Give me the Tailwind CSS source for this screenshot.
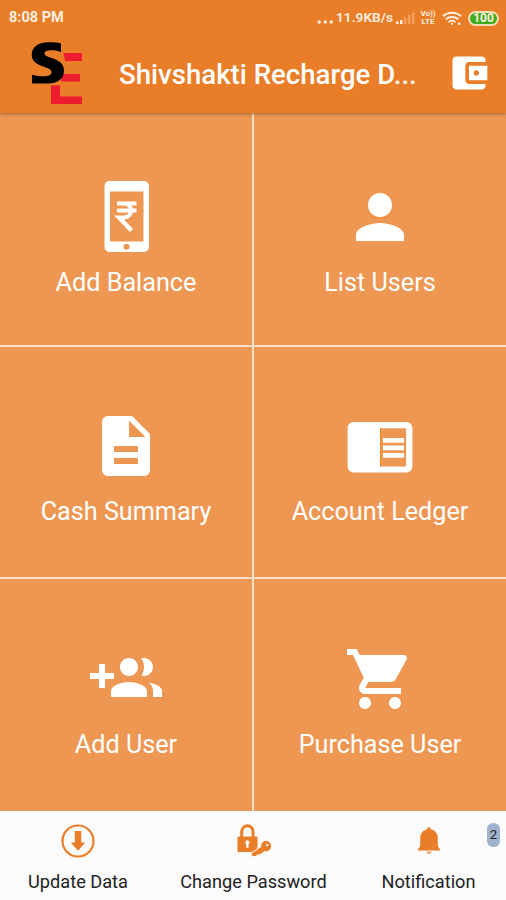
<!DOCTYPE html>
<html lang="en">
<head>
    <meta charset="UTF-8">
    <meta name="viewport" content="width=device-width, initial-scale=1.0">
    <title>Shivshakti Recharge</title>
    <script src="https://cdn.jsdelivr.net/npm/@tailwindcss/browser@4"></script>
</head>
<body class="bg-[#fbfbfb] font-[Roboto,sans-serif] w-[506px] h-[900px] flex flex-col overflow-hidden">

    <!-- Header -->
    <header class="relative z-10 h-[113px] shrink-0 bg-[#ea7d27] text-white shadow-[0_1px_3px_rgba(90,60,30,0.6)]">
        <!-- Status bar -->
        <div class="h-9 pl-[9px] pr-[7px] flex items-center justify-between text-[#fff0e2]">
            <span class="text-[14.500px] font-bold leading-none">8:08 PM</span>
            <div class="flex items-center">
                <svg class="w-[17px] h-4 mr-[2px]" viewBox="0 0 17 16" fill="currentColor">
                    <circle cx="2.2" cy="12" r="1.7"/><circle cx="8.2" cy="12" r="1.7"/><circle cx="14.2" cy="12" r="1.7"/>
                </svg>
                <span class="text-[13.7px] font-semibold leading-none">11.9KB/s</span>
                <svg class="w-[19px] h-[14px] ml-[3px]" viewBox="0 0 19 14" fill="currentColor">
                    <path d="M0 10.500h2.500V13H0zM4 9h2.500v4H4z"/>
                    <path d="M8 6.500h2.500V13H8zM12 4h2.500v9H12zM16 1.500h2.500V13H16z" opacity=".3"/>
                </svg>
                <div class="ml-[5px] w-[16px] h-[16px] text-[8px] font-bold flex flex-col items-center">
                    <span class="h-2 leading-[8px]">Vo))</span>
                    <span class="h-2 leading-[8px]">LTE</span>
                </div>
                <svg class="w-5 h-[15px] ml-[6px]" viewBox="0 0 20 15" fill="none" stroke="currentColor" stroke-width="1.900">
                    <path d="M1 5.200c5-4.600 13-4.600 18 0M3.800 8.200c3.400-3 9-3 12.400 0M6.600 11.200c2-1.700 4.800-1.700 6.800 0"/>
                    <circle cx="10" cy="13" r="1" fill="currentColor" stroke="none"/>
                    <circle cx="17.200" cy="12.800" r="1.300" fill="currentColor" stroke="none"/>
                </svg>
                <div class="ml-[6px] w-[31px] h-[15px] rounded-full border-2 border-[#f6dcb8] bg-[#3fae1c] text-[12px] font-bold leading-[11px] text-center">100</div>
            </div>
        </div>
        <!-- Title bar -->
        <div class="h-[77px] pl-[31px] pr-[15px] flex items-center">
            <svg class="w-[52px] h-[64px] -mt-[2px]" viewBox="31 42 52 64">
                <path fill="#ec1c2e" d="M63.500 53H82v8H65zM62 74h18v7.500H61zM51 85.500h9v11h22v7.500H51z"/>
                <path fill="#000" d="M61 43.400v8.800c-3-1.300-6-1.900-9.500-1.900-4.500 0-7 .9-7 3 0 2 2 3 6.500 4.500 8.500 2.900 13 6 13 13 0 8.600-7 12.700-16 12.700H32v-8.800c4 1.200 8 1.500 11.500 1.500 5 0 8-1.200 8-4 0-2.600-3-3.800-7.500-5.400C36.500 64.200 31.700 61 31.700 55c0-8.500 7-12.800 17.300-12.800 4.500 0 8.500.2 12 1.200z"/>
            </svg>
            <h1 class="ml-[36px] text-[27.600px] font-medium leading-none whitespace-nowrap">Shivshakti Recharge D...</h1>
            <svg class="w-[44px] h-[44px] ml-auto -mt-[3px]" viewBox="0 0 24 24" fill="currentColor">
                <path d="M21 18v1c0 1.100-.9 2-2 2H5c-1.110 0-2-.9-2-2V5c0-1.100.89-2 2-2h14c1.100 0 2 .9 2 2v1h-9c-1.110 0-2 .9-2 2v8c0 1.100.89 2 2 2h9zm-9-2h10V8H12v8zm4-2.500c-.83 0-1.500-.67-1.500-1.500s.67-1.500 1.500-1.500 1.500.67 1.500 1.500-.67 1.500-1.500 1.500z"/>
            </svg>
        </div>
    </header>

    <!-- Menu Grid -->
    <main class="h-[698px] shrink-0 grid grid-cols-[252px_252px] grid-rows-[232px_230px_232px] gap-[2px] bg-[#fbdfc6] text-white text-[25.200px] leading-8">
        <a href="#" class="bg-[#ee9753] flex flex-col items-center pt-[68px]">
            <svg class="w-[72px] h-[72px]" viewBox="0 0 72 72" fill="currentColor">
                <path fill-rule="evenodd" d="M19.500 0H54a5 5 0 0 1 5 5v61a5 5 0 0 1-5 5H19.500a5 5 0 0 1-5-5V5a5 5 0 0 1 5-5zM20 10.500v50h33.500v-50zM36.500 62.700a3 3 0 1 0 0 6 3 3 0 0 0 0-6z"/>
                <path d="M27 22.500h19.500M27 29.500h19.500M28 22.500h5.500c10 0 10 14 0 14h-4.500l12.500 13" fill="none" stroke="currentColor" stroke-width="4.200"/>
            </svg>
            <span class="mt-[14px]">Add Balance</span>
        </a>
        <a href="#" class="bg-[#ee9753] flex flex-col items-center pt-[68px]">
            <svg class="w-[72px] h-[72px]" viewBox="0 0 24 24" fill="currentColor">
                <path d="M12 12c2.210 0 4-1.790 4-4s-1.790-4-4-4-4 1.790-4 4 1.790 4 4 4zm0 2c-2.670 0-8 1.340-8 4v2h16v-2c0-2.660-5.330-4-8-4z"/>
            </svg>
            <span class="mt-[14px]">List Users</span>
        </a>
        <a href="#" class="bg-[#ee9753] flex flex-col items-center pt-[63px]">
            <svg class="w-[72px] h-[72px]" viewBox="0 0 24 24" fill="currentColor">
                <path d="M14 2H6c-1.100 0-1.990.9-1.990 2L4 20c0 1.100.89 2 1.990 2H18c1.100 0 2-.9 2-2V8l-6-6zm2 16H8v-2h8v2zm0-4H8v-2h8v2zm-3-5V3.500L18.500 9H13z"/>
            </svg>
            <span class="mt-[14px]">Cash Summary</span>
        </a>
        <a href="#" class="bg-[#ee9753] flex flex-col items-center pt-[63px]">
            <svg class="w-[72px] h-[72px]" viewBox="0 0 24 24" fill="currentColor">
                <path d="M20.700 4H3.300C2.200 4 1.200 4.900 1.200 6v12.800c0 1.100 1 2 2.100 2h17.400c1.100 0 2.100-.9 2.100-2V6c0-1.100-1-2-2.100-2zm0 14.800H12V6.100h8.700z"/>
                <path d="M13 9.300h7v1.600h-7zM13 11.800h7v1.600h-7zM13 14.300h7v1.600h-7z"/>
                <path d="M12 6.100h.3v12.700H12z" fill="#ee8a1c"/>
            </svg>
            <span class="mt-[14px]">Account Ledger</span>
        </a>
        <a href="#" class="bg-[#ee9753] flex flex-col items-center pt-[64px]">
            <svg class="w-[72px] h-[72px]" viewBox="0 0 24 24" fill="currentColor">
                <path d="M8 10H5V7H3v3H0v2h3v3h2v-3h3v-2zm10 1c1.660 0 2.990-1.340 2.990-3S19.660 5 18 5c-.32 0-.63.05-.91.14.57.81.9 1.790.9 2.860s-.34 2.040-.9 2.860c.28.09.59.14.91.14zm-5 0c1.660 0 2.990-1.340 2.990-3S14.660 5 13 5c-1.660 0-3 1.340-3 3s1.340 3 3 3zm6.620 2.160c.83.73 1.380 1.660 1.380 2.840v2h3v-2c0-1.540-2.370-2.490-4.380-2.840zM13 13c-2 0-6 1-6 3v2h12v-2c0-2-4-3-6-3z"/>
            </svg>
            <span class="mt-[14px]">Add User</span>
        </a>
        <a href="#" class="bg-[#ee9753] flex flex-col items-center pt-[64px]">
            <svg class="w-[72px] h-[72px]" viewBox="0 0 24 24" fill="currentColor">
                <path d="M7 18c-1.100 0-1.990.9-1.990 2S5.900 22 7 22s2-.9 2-2-.9-2-2-2zM1 2v2h2l3.600 7.590-1.350 2.450c-.16.28-.25.61-.25.96 0 1.100.9 2 2 2h12v-2H7.420c-.14 0-.25-.11-.25-.25l.03-.12.9-1.630h7.450c.75 0 1.410-.41 1.750-1.030l3.580-6.490c.08-.14.12-.31.12-.48 0-.55-.45-1-1-1H5.210l-.94-2H1zm16 16c-1.100 0-1.990.9-1.990 2s.89 2 1.990 2 2-.9 2-2-.9-2-2-2z"/>
            </svg>
            <span class="mt-[14px]">Purchase User</span>
        </a>
    </main>

    <!-- Bottom Navigation -->
    <nav class="relative flex-1 grid grid-cols-[156px_195px_155px] text-[18.200px] leading-6 text-[#222]">
        <a href="#" class="flex flex-col items-center pt-[12px]">
            <svg class="w-[36px] h-[36px] text-[#ea7d27]" viewBox="0 0 36 36" fill="currentColor">
                <circle cx="18" cy="18" r="15.500" fill="none" stroke="currentColor" stroke-width="2.200"/>
                <path d="M14.800 8h6.400v11.500h4L18 27.800l-7.200-8.300h4z"/>
            </svg>
            <span class="mt-[11px]">Update Data</span>
        </a>
        <a href="#" class="flex flex-col items-center pt-[12px]">
            <svg class="w-[36px] h-[36px] text-[#ea7d27]" viewBox="0 0 36 36" fill="currentColor">
                <path d="M5.700 15V9a5.700 6.300 0 0 1 11.400 0v6" fill="none" stroke="currentColor" stroke-width="3"/>
                <rect x="1.500" y="13.500" width="20" height="15.500" rx="1"/>
                <path d="M11.400 17.200a2.200 2.200 0 0 0-1.200 4v3.600h2.400v-3.600a2.200 2.200 0 0 0-1.200-4z" fill="#fbfbfb"/>
                <!-- key in front of the lock -->
                <g stroke="#fbfbfb" stroke-width="2" paint-order="stroke">
                    <path d="M15.500 30.500l9.700-6.500c-.4-3.600 2-6 5-6 3 0 4.900 2.200 4.900 4.900 0 3.400-2.900 5.800-6.200 5.200l-3.400 2.200-1.500 1.200-2.100-.2-2.100 1.600-3.300.4z"/>
                </g>
                <circle cx="31.300" cy="22" r="1.200" fill="#fbfbfb"/>
            </svg>
            <span class="mt-[11px]">Change Password</span>
        </a>
        <a href="#" class="flex flex-col items-center pt-[12px]">
            <svg class="w-[36px] h-[36px] text-[#ea7d27]" viewBox="0 0 36 36" fill="currentColor">
                <path d="M18 4.200c1.200 0 1.800.8 1.800 2 4.500 1 7 4.500 7 9v8l2.200 3v1.300H7v-1.300l2.200-3v-8c0-4.500 2.500-8 7-9 0-1.200.6-2 1.800-2z"/>
                <path d="M15.500 28.500h5c0 3.300-5 3.300-5 0z" opacity=".7"/>
            </svg>
            <span class="mt-[11px]">Notification</span>
        </a>
        <span class="absolute right-[6px] top-[12px] w-[13px] h-[24px] rounded-[6px] bg-[#9fb3cf] text-[13px] leading-[24px] text-center">2</span>
    </nav>

</body>
</html>
